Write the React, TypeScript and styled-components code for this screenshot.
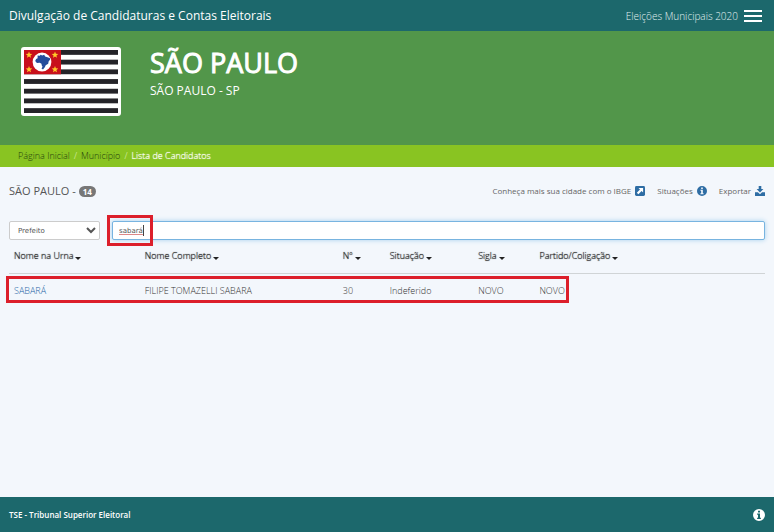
import React, { useState } from "react";
import styled, { createGlobalStyle } from "styled-components";

const GlobalStyle = createGlobalStyle`
  *, *::before, *::after { box-sizing: border-box; }
  body {
    margin: 0;
    background: #f3f7fc;
    color: #333;
    font-family: "Open Sans", "Noto Sans", sans-serif;
    font-size: 9px;
    line-height: 12px;
    font-weight: 300;
  }
  button, input, select { font: inherit; color: inherit; }
  a { color: inherit; text-decoration: none; }
`;

const Page = styled.div`
  display: flex;
  flex-direction: column;
  min-height: 100vh;
`;

const TopBar = styled.header`
  display: flex;
  align-items: center;
  justify-content: space-between;
  height: 31px;
  padding: 0 12px 0 9px;
  background: #1c686c;
  color: #fff;
`;

const SiteTitle = styled.a`
  font-size: 12px;
  line-height: 16px;
  font-weight: 400;
`;

const TopActions = styled.div`
  display: flex;
  align-items: center;
  gap: 6px;
  font-size: 10px;
  line-height: 14px;
  color: #e0f0f0;
`;

const IconButton = styled.button`
  display: block;
  padding: 0;
  border: 0;
  background: none;
  color: #fff;
  cursor: pointer;
  svg { display: block; }
`;

const Hero = styled.section`
  display: flex;
  align-items: flex-start;
  gap: 29px;
  height: 114px;
  padding: 16px 21px;
  background: #52964a;
  color: #fff;
`;

const FlagFrame = styled.div`
  padding: 3px;
  border-radius: 3px;
  background: #fff;
  svg { display: block; }
`;

const CityName = styled.h1`
  margin: 0;
  font-size: 27px;
  line-height: 32px;
  font-weight: 400;
  -webkit-text-stroke: 1px currentColor;
`;

const CityState = styled.p`
  margin: 4px 0 0;
  font-size: 12px;
  line-height: 16px;
  font-weight: 400;
`;

const Breadcrumb = styled.nav`
  display: flex;
  align-items: center;
  gap: 4px;
  height: 22px;
  padding: 0 18px;
  background: #89c422;
  color: #23400c;
`;

const Slash = styled.span`
  color: #e4f4c4;
`;

const Current = styled.span`
  color: #fff;
  text-shadow: 0 0 1px #fff;
`;

const Content = styled.main`
  flex: 1;
  padding: 15px 9px;
`;

const Heading = styled.div`
  display: flex;
  align-items: center;
  justify-content: space-between;
  height: 18px;
`;

const ListTitle = styled.h2`
  display: flex;
  align-items: center;
  gap: 3px;
  margin: 0;
  color: #555;
  font-size: 11px;
  line-height: 16px;
  font-weight: 400;
`;

const Badge = styled.span`
  padding: 0 4px;
  border-radius: 6px;
  background: #777;
  color: #fff;
  font-size: 8px;
  line-height: 11px;
  font-weight: 700;
`;

const Links = styled.div`
  display: flex;
  gap: 12px;
  color: #666;
  font-size: 8px;
  font-weight: 400;
`;

const ToolLink = styled.a`
  display: flex;
  align-items: center;
  gap: 4px;
  svg { color: #2e6da4; }
`;

const Filters = styled.form`
  display: flex;
  gap: 12px;
  margin-top: 21px;
`;

const Office = styled.select`
  width: 91px;
  height: 19px;
  padding: 0 0 0 4px;
  border: 1px solid #ccc;
  border-radius: 2px;
  background: #fff;
  color: #555;
  font-family: "DejaVu Sans", sans-serif;
  font-size: 7px;
  font-weight: 400;
`;

const SearchBox = styled.div`
  position: relative;
  flex: 1;
`;

const Search = styled.input`
  display: block;
  width: 100%;
  height: 19px;
  padding: 0 6px;
  border: 1px solid #78b4e0;
  border-radius: 2px;
  outline: 0;
  background: #fff;
  box-shadow: 0 0 5px #a5d0ee;
  color: #555;
  font-family: "DejaVu Sans", sans-serif;
  font-size: 7px;
  font-weight: 400;
  text-decoration: underline #d88;
`;

const Mark = styled.span<{ $area: string }>`
  position: absolute;
  inset: ${(p) => p.$area};
  border: 3px solid #dc1f2b;
  pointer-events: none;
`;

const Caret = styled.span`
  position: absolute;
  left: 31px;
  top: 4px;
  width: 1px;
  height: 11px;
  background: #444;
`;

const Results = styled.div`
  position: relative;
`;

const Table = styled.table`
  width: 100%;
  table-layout: fixed;
  border-collapse: collapse;
  text-align: left;
`;

const Th = styled.th<{ $width?: string }>`
  width: ${(p) => p.$width ?? "auto"};
  height: 33px;
  padding: 0 5px;
  border-bottom: 1px solid #d0d4d6;
  color: #222;
  font-weight: 300;
  text-shadow: 0 0 1px #333;
`;

const Sort = styled.button`
  display: flex;
  align-items: center;
  gap: 2px;
  padding: 0;
  border: 0;
  background: none;
  cursor: pointer;
  text-shadow: inherit;
  &::after {
    content: "";
    margin-top: 4px;
    border: 3px solid transparent;
    border-top-color: #222;
    border-bottom: 0;
  }
`;

const Td = styled.td`
  height: 35px;
  padding: 0 5px;
`;

const CandidateLink = styled.a`
  color: #1b62a5;
`;

const Footer = styled.footer`
  display: flex;
  align-items: center;
  justify-content: space-between;
  height: 35px;
  padding: 0 9px;
  background: #1c686c;
  color: #fff;
  font-size: 8px;
  font-weight: 600;
`;

const stars = [
  [5, 4],
  [31, 4],
  [5, 19],
  [31, 19],
];

function Flag() {
  return (
    <svg width="94" height="63" viewBox="0 0 94 65" preserveAspectRatio="none" role="img" aria-label="Bandeira de São Paulo">
      <rect width="94" height="65" fill="#fff" />
      {[0, 10, 20, 30, 40, 50, 60].map((y) => (
        <rect key={y} y={y} width="94" height="5" fill="#242328" />
      ))}
      <rect width="37" height="25" fill="#c8101b" />
      <ellipse cx="18" cy="12.5" rx="9.4" ry="9.8" fill="#fff" />
      <path
        d="M13.6 5.8l2.2.2.8-1 1.6.6 2-.6.9 1.8 2.4.7 2.5 1 .2 1.4-1.6 1.9-.4 2.5-2.5 1.4-.9 2-1.8 2.4-1.5-1 1-1.9-.8-1.4-.2-1.6-1.8-1-2.8.1-1.7-1.9.9-2 1.5-1z"
        fill="#244c9b"
      />
      {stars.map(([x, y]) => (
        <path
          key={`${x}-${y}`}
          transform={`translate(${x} ${y + 1})`}
          d="M0-3.4L.9-1.1 3.3-1 1.4.6 2 3 0 1.7-2 3-1.4.6-3.3-1-.9-1.1z"
          fill="#ffc928"
        />
      ))}
    </svg>
  );
}

function InfoIcon({ size }: { size: number }) {
  return (
    <svg width={size} height={size} viewBox="0 0 12 12" aria-hidden="true">
      <path
        fillRule="evenodd"
        fill="currentColor"
        d="M6 0a6 6 0 1 1 0 12A6 6 0 0 1 6 0zM5 1.8v1.8h2V1.8zM4.1 4.6v1.2H5v2.9h-.9v1.2h3.8V8.7H7V4.6z"
      />
    </svg>
  );
}

function ExternalIcon() {
  return (
    <svg width="10" height="10" viewBox="0 0 10 10" aria-hidden="true">
      <rect width="10" height="10" rx="1.4" fill="currentColor" />
      <path d="M3.5 2h4.6v4.6L6.6 5.1 3.4 8.3 1.8 6.7 5 3.5z" fill="#fff" />
    </svg>
  );
}

function DownloadIcon() {
  return (
    <svg width="10" height="10" viewBox="0 0 10 10" aria-hidden="true">
      <path d="M3.7 0h2.6v3H8.4L5 6.5 1.6 3h2.1zM0 6.3h2.9L5 8.2l2.1-1.9H10V10H0z" fill="currentColor" />
    </svg>
  );
}

const columns = [
  { label: "Nome na Urna", width: "17.3%" },
  { label: "Nome Completo", width: "26.2%" },
  { label: "Nº", width: "6.2%" },
  { label: "Situação", width: "11.7%" },
  { label: "Sigla", width: "8.1%" },
  { label: "Partido/Coligação" },
];

export default function App() {
  const [query, setQuery] = useState("sabará");

  return (
    <>
      <GlobalStyle />
      <Page>
        <TopBar>
          <SiteTitle href="#">Divulgação de Candidaturas e Contas Eleitorais</SiteTitle>
          <TopActions>
            <span>Eleições Municipais 2020</span>
            <IconButton type="button" aria-label="Menu">
              <svg width="18" height="12" viewBox="0 0 18 12" aria-hidden="true">
                <path d="M0 1h18M0 6h18M0 11h18" stroke="currentColor" strokeWidth="2" />
              </svg>
            </IconButton>
          </TopActions>
        </TopBar>

        <Hero>
          <FlagFrame>
            <Flag />
          </FlagFrame>
          <div>
            <CityName>SÃO PAULO</CityName>
            <CityState>SÃO PAULO - SP</CityState>
          </div>
        </Hero>

        <Breadcrumb aria-label="Navegação">
          <a href="#">Página Inicial</a>
          <Slash>/</Slash>
          <a href="#">Município</a>
          <Slash>/</Slash>
          <Current aria-current="page">Lista de Candidatos</Current>
        </Breadcrumb>

        <Content>
          <Heading>
            <ListTitle>
              SÃO PAULO - <Badge>14</Badge>
            </ListTitle>
            <Links>
              <ToolLink href="#">
                Conheça mais sua cidade com o IBGE <ExternalIcon />
              </ToolLink>
              <ToolLink href="#">
                Situações <InfoIcon size={10} />
              </ToolLink>
              <ToolLink href="#">
                Exportar <DownloadIcon />
              </ToolLink>
            </Links>
          </Heading>

          <Filters onSubmit={(e) => e.preventDefault()}>
            <Office aria-label="Cargo" defaultValue="Prefeito">
              <option>Prefeito</option>
            </Office>
            <SearchBox>
              <Search
                type="text"
                aria-label="Pesquisar candidato"
                spellCheck={false}
                value={query}
                onChange={(e) => setQuery(e.target.value)}
              />
              <Caret />
              <Mark $area="-6px calc(100% - 41px) -6px -5px" />
            </SearchBox>
          </Filters>

          <Results>
            <Table>
              <thead>
                <tr>
                  {columns.map((c) => (
                    <Th key={c.label} $width={c.width} scope="col">
                      <Sort type="button">{c.label}</Sort>
                    </Th>
                  ))}
                </tr>
              </thead>
              <tbody>
                <tr>
                  <Td>
                    <CandidateLink href="#">SABARÁ</CandidateLink>
                  </Td>
                  <Td>FILIPE TOMAZELLI SABARA</Td>
                  <Td>30</Td>
                  <Td>Indeferido</Td>
                  <Td>NOVO</Td>
                  <Td>NOVO</Td>
                </tr>
              </tbody>
            </Table>
            <Mark $area="36px 25.9% 5px -3px" />
          </Results>
        </Content>

        <Footer>
          <span>TSE - Tribunal Superior Eleitoral</span>
          <IconButton type="button" aria-label="Informações">
            <InfoIcon size={12} />
          </IconButton>
        </Footer>
      </Page>
    </>
  );
}
